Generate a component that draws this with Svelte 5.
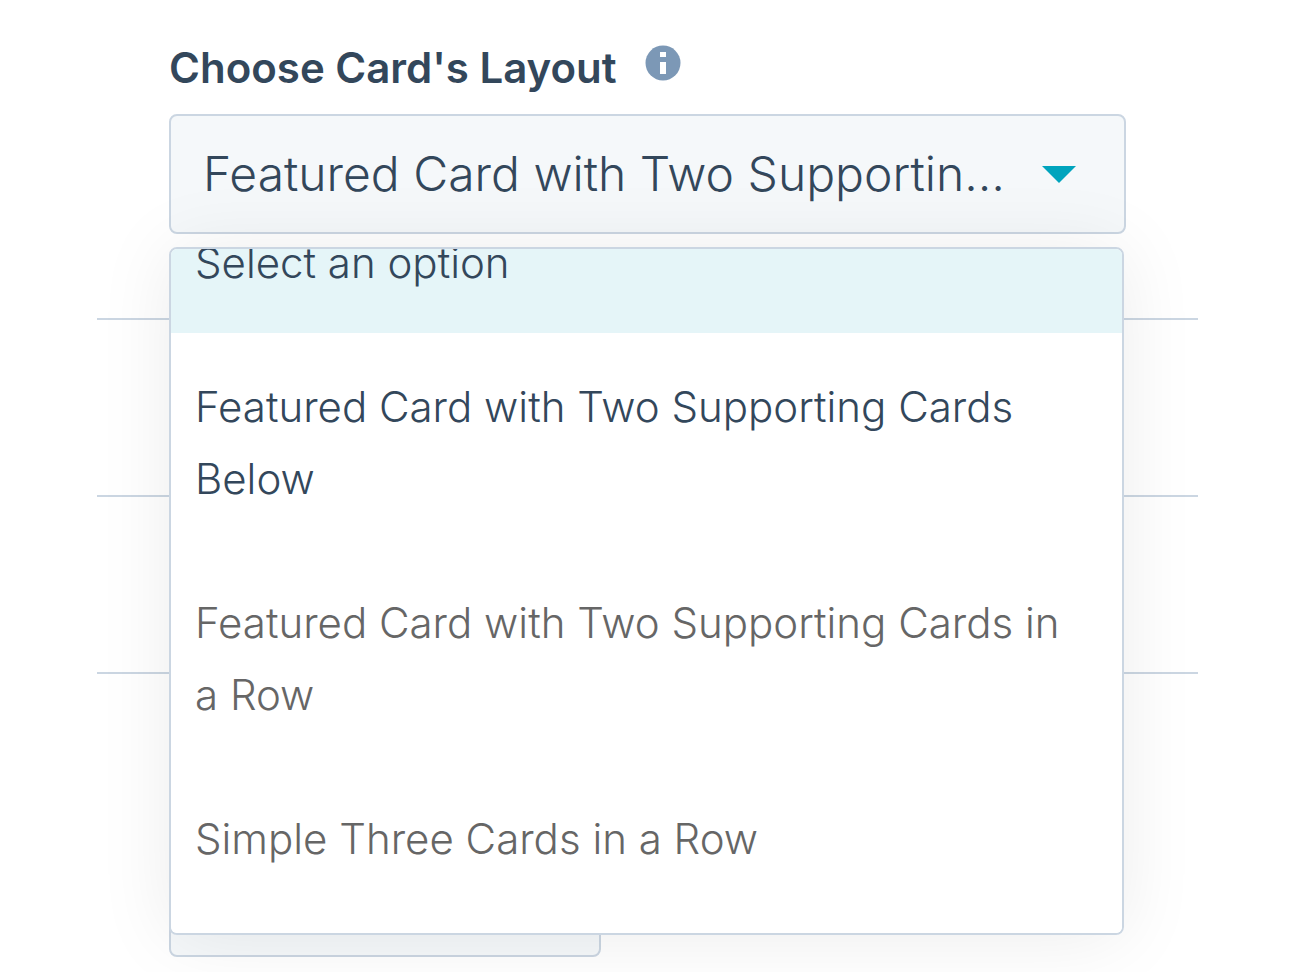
<script>
    import { onMount } from "svelte";

    const options = [
        { label: "Select an option", muted: false },
        { label: "Featured Card with Two Supporting Cards Below", muted: false },
        { label: "Featured Card with Two Supporting Cards in a Row", muted: true },
        { label: "Simple Three Cards in a Row", muted: true },
    ];

    let selected = options[1].label;
    let highlighted = 0;
    let open = true;
    let list;

    function choose(option) {
        selected = option.label;
        open = false;
    }

    onMount(() => {
        list.scrollTop = list.scrollHeight;
    });
</script>

<main>
    <section class="field">
        <div class="label-row">
            <label for="layout">Choose Card's Layout</label>
            <button class="info" aria-label="More information">
                <svg width="36" height="36" viewBox="0 0 36 36">
                    <circle cx="18" cy="18" r="17.5" fill="#7c98b6" />
                    <path d="M15 7h6v5h-6zM15 17h6v12h-6z" fill="#fff" />
                </svg>
            </button>
        </div>
        <div class="select">
            <button
                id="layout"
                class="toggle"
                aria-haspopup="listbox"
                aria-expanded={open}
                on:click={() => (open = !open)}
            >
                <span class="value">{selected}</span>
                <svg width="34" height="17" viewBox="0 0 34 17">
                    <path d="M0 0h34L17 17z" fill="#00a4bd" />
                </svg>
            </button>
            {#if open}
                <div class="menu" role="listbox" aria-label="Card layouts" bind:this={list}>
                    {#each options as option, i}
                        <button
                            class="option"
                            class:highlighted={i === highlighted}
                            class:muted={option.muted}
                            role="option"
                            aria-selected={option.label === selected}
                            on:mouseenter={() => (highlighted = i)}
                            on:click={() => choose(option)}
                        >
                            {option.label}
                        </button>
                    {/each}
                </div>
            {/if}
        </div>
    </section>
    <section class="row"></section>
    <section class="row"></section>
    <section class="last">
        <button class="secondary" aria-label="Add"></button>
    </section>
</main>

<style>
    :global(body) {
        background: #fff;
    }

    main {
        padding: 0 98px 15px 97px;
        font-family: Inter, "Open Sans", sans-serif;
        font-weight: 330;
        color: #33475b;
    }

    button {
        box-sizing: border-box;
        font: inherit;
        color: inherit;
        text-align: left;
        cursor: pointer;
    }

    section {
        box-sizing: border-box;
        padding: 0 72px;
        border-bottom: 2px solid #cbd6e2;
    }

    .field {
        padding-top: 40px;
        padding-bottom: 84px;
    }

    .label-row {
        display: flex;
        align-items: flex-start;
        gap: 28px;
        height: 74px;
    }

    label {
        font-size: 42px;
        line-height: 56px;
        font-weight: 560;
        white-space: nowrap;
    }

    .info {
        display: flex;
        margin-top: 5px;
        padding: 0;
        border: none;
        background: none;
    }

    .select {
        position: relative;
    }

    .toggle {
        display: flex;
        align-items: center;
        gap: 36px;
        width: 100%;
        height: 120px;
        padding: 0 48px 0 32px;
        border: 2px solid #cbd6e2;
        border-radius: 8px;
        background: #f5f8fa;
        font-size: 48px;
        line-height: 72px;
    }

    .toggle svg {
        flex: none;
    }

    .value {
        flex: 1;
        min-width: 0;
        overflow: hidden;
        text-overflow: ellipsis;
        white-space: nowrap;
    }

    .menu {
        position: absolute;
        z-index: 1;
        top: 133px;
        left: 0;
        right: 2px;
        box-sizing: border-box;
        height: 688px;
        padding: 24px 0;
        overflow-y: auto;
        scrollbar-width: none;
        border: 2px solid #cbd6e2;
        border-radius: 8px;
        background: #fff;
        box-shadow: 0 2px 76px rgba(0, 0, 0, 0.08);
    }

    .option {
        display: block;
        width: 100%;
        padding: 38px 32px 34px 24px;
        border: none;
        background: none;
        font-size: 42px;
        line-height: 72px;
    }

    .highlighted {
        background: #e5f5f8;
    }

    .muted {
        color: #666;
    }

    .row {
        height: 177px;
    }

    .last {
        padding-top: 187px;
        border-bottom: none;
    }

    .secondary {
        display: block;
        width: 432px;
        height: 96px;
        border: 2px solid #cbd6e2;
        border-radius: 8px;
        background: #f5f8fa;
    }
</style>
